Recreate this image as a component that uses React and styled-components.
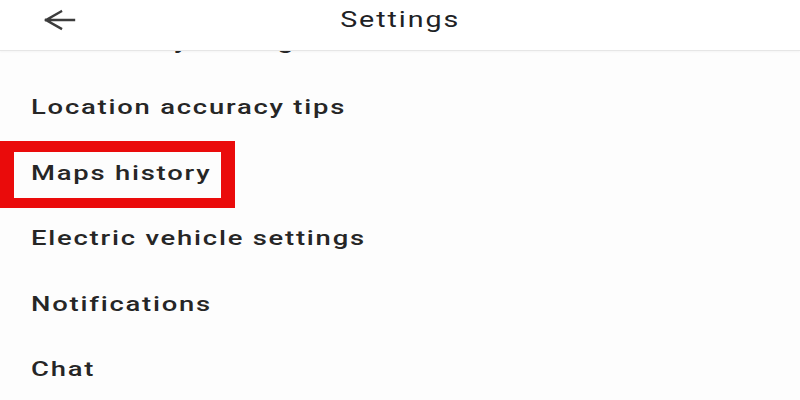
import React from "react";
import styled, { createGlobalStyle } from "styled-components";

const Global = createGlobalStyle`
  html, body { margin: 0; padding: 0; background: #fdfdfd; }
  body { font-family: Roboto, "Noto Sans", "Liberation Sans", sans-serif; }
`;

const Screen = styled.div`
  position: relative;
  width: 800px;
  height: 400px;
  overflow: hidden;
  background: #fdfdfd;
`;

const Header = styled.header`
  position: absolute;
  top: 0;
  left: 0;
  right: 0;
  height: 50px;
  background: #ffffff;
  box-shadow: 0 1px 0 #e6e6e6, 0 2px 2px rgba(0, 0, 0, 0.04);
  display: flex;
  align-items: center;
  justify-content: center;
  z-index: 2;
`;

const BackButton = styled.button`
  position: absolute;
  left: 40px;
  top: 4px;
  width: 40px;
  height: 32px;
  padding: 0;
  border: none;
  background: transparent;
  display: flex;
  align-items: center;
  justify-content: center;
`;

const Title = styled.h1`
  margin: 0 0 12px;
  font-size: 22px;
  font-weight: 400;
  color: #202124;
  letter-spacing: 1.5px;
  transform: scaleX(1.3);
`;

const List = styled.ul`
  list-style: none;
  margin: 0;
  padding: 9px 0 0;
`;

const Row = styled.li`
  position: relative;
  height: 65.5px;
  display: flex;
  align-items: center;
  padding-left: 31px;

  ${(p) =>
    p.$highlight &&
    `
    &::after {
      content: "";
      position: absolute;
      left: 0;
      top: 1px;
      width: 235px;
      height: 67px;
      box-sizing: border-box;
      border-style: solid;
      border-color: #ea0b0b;
      border-width: 11px 14px 10px 14px;
    }
  `}
`;

const Label = styled.span`
  font-size: 20px;
  font-weight: 500;
  color: #262626;
  letter-spacing: 1.3px;
  transform: scaleX(1.37);
  transform-origin: left center;
  white-space: nowrap;
`;

const items = [
  { label: "Your safety settings" },
  { label: "Location accuracy tips" },
  { label: "Maps history", highlight: true },
  { label: "Electric vehicle settings" },
  { label: "Notifications" },
  { label: "Chat" },
];

export default function App() {
  return (
    <Screen>
      <Global />
      <Header>
        <BackButton aria-label="Back">
          <svg width="32" height="22" viewBox="0 0 32 22" fill="none">
            <path
              d="M2 11 H30 M2 11 L17 2.5 M2 11 L17 19.5"
              stroke="#3c3c3c"
              strokeWidth="2.4"
              strokeLinecap="square"
            />
          </svg>
        </BackButton>
        <Title>Settings</Title>
      </Header>
      <List>
        {items.map((it) => (
          <Row key={it.label} $highlight={it.highlight}>
            <Label>{it.label}</Label>
          </Row>
        ))}
      </List>
    </Screen>
  );
}
